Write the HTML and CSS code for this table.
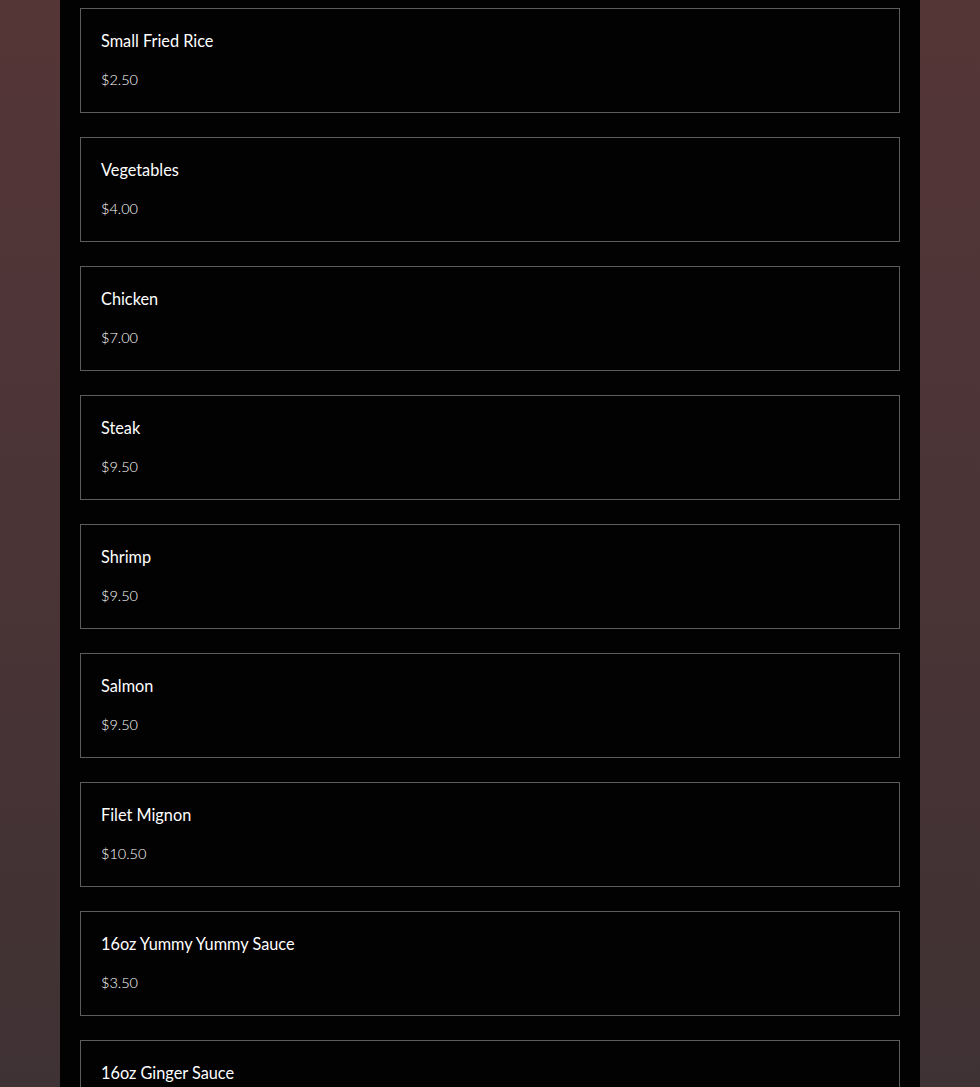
FILE: index.html
```html
<!DOCTYPE html>
<html lang="en">
<head>
    <meta charset="UTF-8">
    <meta name="viewport" content="width=device-width, initial-scale=1.0">
    <title>Menu | Sides</title>
    <link rel="stylesheet" href="styles.css">
</head>
<body>
    <main class="menu-column">
        <div class="menu-item">
            <h3 class="item-name">Small Fried Rice</h3>
            <p class="item-price">$2.50</p>
        </div>
        <div class="menu-item">
            <h3 class="item-name">Vegetables</h3>
            <p class="item-price">$4.00</p>
        </div>
        <div class="menu-item">
            <h3 class="item-name">Chicken</h3>
            <p class="item-price">$7.00</p>
        </div>
        <div class="menu-item">
            <h3 class="item-name">Steak</h3>
            <p class="item-price">$9.50</p>
        </div>
        <div class="menu-item">
            <h3 class="item-name">Shrimp</h3>
            <p class="item-price">$9.50</p>
        </div>
        <div class="menu-item">
            <h3 class="item-name">Salmon</h3>
            <p class="item-price">$9.50</p>
        </div>
        <div class="menu-item">
            <h3 class="item-name">Filet Mignon</h3>
            <p class="item-price">$10.50</p>
        </div>
        <div class="menu-item">
            <h3 class="item-name">16oz Yummy Yummy Sauce</h3>
            <p class="item-price">$3.50</p>
        </div>
        <div class="menu-item">
            <h3 class="item-name">16oz Ginger Sauce</h3>
            <p class="item-price">$3.50</p>
        </div>
    </main>
</body>
</html>
```

FILE: styles.css
```css
body, html {
    margin: 0;
    padding: 0;
    font-family: Lato, "Noto Sans", sans-serif;
    color: white;
    background: linear-gradient(180deg, #553637 0%, #4a3436 50%, #3f3234 100%);
    background-attachment: fixed;
    min-height: 100%;
}

/* Main column */
.menu-column {
    width: 860px;
    margin: 0 auto;
    box-sizing: border-box;
    padding: 8px 20px 40px;
    background-color: #030203;
    display: flex;
    flex-direction: column;
    gap: 24px;
}

/* Cards */
.menu-item {
    border: 1px solid #5c5c5c;
    padding: 22px 20px 22px;
}

.item-name {
    margin: 0;
    font-size: 16.3px;
    font-weight: 400;
    line-height: 20px;
    color: #ffffff;
}

.item-price {
    margin: 19px 0 0;
    font-size: 14.5px;
    font-weight: 300;
    line-height: 20px;
    color: #ffffff;
}
```
